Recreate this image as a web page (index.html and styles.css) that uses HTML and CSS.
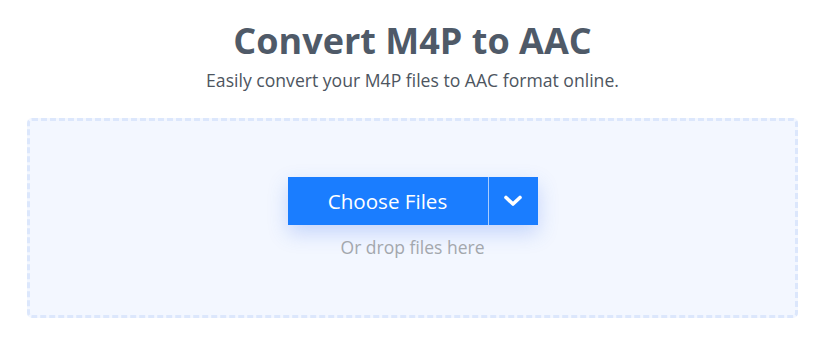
FILE: index.html
```html
<!DOCTYPE html>
<html lang="en">
<head>
<meta charset="UTF-8">
<meta name="viewport" content="width=device-width, initial-scale=1.0">
<title>Convert M4P to AAC</title>
<link rel="stylesheet" href="styles.css">
</head>
<body>

<div class="page">
  <div class="header">
    <h1>Convert M4P to AAC</h1>
    <p class="subtitle">Easily convert your M4P files to AAC format online.</p>
  </div>

  <div class="dropzone">
    <div class="button-group">
      <button class="choose-btn">Choose Files</button>
      <button class="dropdown-btn" title="more">
        <svg width="18" height="12" viewBox="0 0 18 12">
          <path d="M2 2.5 L9 9 L16 2.5" fill="none" stroke="#fff" stroke-width="3.6" stroke-linecap="round" stroke-linejoin="round"/>
        </svg>
      </button>
    </div>
    <div class="drop-text">Or drop files here</div>
  </div>
</div>

</body>
</html>
```
FILE: styles.css
```css
body {
  margin: 0;
  background-color: white;
  font-family: "Open Sans", "Noto Sans", sans-serif;
}
.page {
  padding: 18px 27px 0 27px;
}
.header {
  text-align: center;
}
.header h1 {
  margin: 0;
  font-size: 36px;
  line-height: 46px;
  font-weight: 700;
  color: #4f5a68;
}
.subtitle {
  margin: 5px 0 0 0;
  font-size: 17.6px;
  line-height: 22px;
  color: #4d5560;
}
.dropzone {
  margin-top: 27px;
  height: 138px;
  border: 3px dashed #dce7fc;
  border-radius: 5px;
  background-color: #f3f7ff;
  display: flex;
  flex-direction: column;
  align-items: center;
  padding-top: 56px;
}
.button-group {
  display: flex;
  box-shadow: 0 8px 20px rgba(60, 110, 240, 0.25);
}
.choose-btn {
  width: 200px;
  height: 48px;
  border: none;
  background-color: #1a7dff;
  color: white;
  font-family: inherit;
  font-size: 20.6px;
  cursor: pointer;
}
.dropdown-btn {
  width: 50px;
  height: 48px;
  border: none;
  border-left: 1px solid #a9cdff;
  background-color: #1a7dff;
  display: flex;
  align-items: center;
  justify-content: center;
  cursor: pointer;
}
.drop-text {
  margin-top: 10px;
  font-size: 17.5px;
  color: #a3a7ad;
}
```
